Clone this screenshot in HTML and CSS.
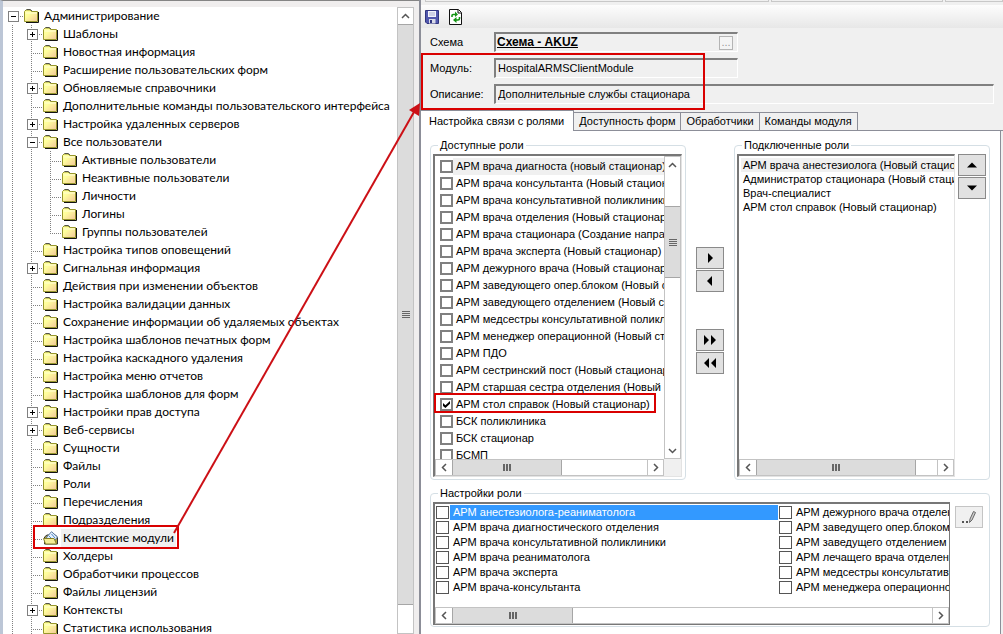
FILE: index.html
```html
<!DOCTYPE html>
<html lang="ru">
<head>
<meta charset="utf-8">
<title>Администрирование</title>
<link rel="stylesheet" href="styles.css">
</head>
<body>
<svg class="defs" aria-hidden="true">
  <defs>
    <linearGradient id="fold" x1="0" y1="0" x2="1" y2="1">
      <stop offset="0.35" stop-color="#ffff9c"/><stop offset="1" stop-color="#f3c79a"/>
    </linearGradient>
    <symbol id="folder" viewBox="0 0 16 14">
      <path d="M2 13.5H14.5V3" fill="none" stroke="#111" stroke-width="1"/>
      <path d="M.5 12.5V2.5L2 1H6L7.5 2.5H13.5V12.5Z" fill="url(#fold)" stroke="#97972b"/>
      <path d="M1.5 4H13" stroke="#ffffd8"/>
      <path d="M2.5 .5H6.5L8 2" fill="none" stroke="#333" stroke-width=".8"/>
    </symbol>
    <symbol id="folder-open" viewBox="0 0 16 14">
      <path d="M1.5 13V6L4 4H12L14.5 6V13Z" fill="#b5a53c" stroke="#333"/>
      <path d="M3 7L8.500 .7L14.500 6L12 9Z" fill="#e4efff" stroke="#57779f"/>
      <path d="M6 5L9 8M8.500 3L12 7" stroke="#4b8ac9"/>
      <path d="M2.500 13L.5 7.500H11L13.500 13Z" fill="#f6ee94" stroke="#85802a"/>
    </symbol>
  </defs>
</svg>
<div class="app">
  <aside class="sidebar">
    <nav class="tree" aria-label="Администрирование">
      <ul class="root">
        <li><div class="row"><button class="tog minus" aria-label="Свернуть"></button><svg class="ico"><use href="#folder"/></svg><span>Администрирование</span></div>
        <ul>
          <li><div class="row"><button class="tog plus" aria-label="Развернуть"></button><svg class="ico"><use href="#folder"/></svg><span>Шаблоны</span></div></li>
          <li><div class="row"><i class="stem"></i><svg class="ico"><use href="#folder"/></svg><span>Новостная информация</span></div></li>
          <li><div class="row"><i class="stem"></i><svg class="ico"><use href="#folder"/></svg><span>Расширение пользовательских форм</span></div></li>
          <li><div class="row"><button class="tog plus" aria-label="Развернуть"></button><svg class="ico"><use href="#folder"/></svg><span>Обновляемые справочники</span></div></li>
          <li><div class="row"><i class="stem"></i><svg class="ico"><use href="#folder"/></svg><span>Дополнительные команды пользовательского интерфейса</span></div></li>
          <li><div class="row"><button class="tog plus" aria-label="Развернуть"></button><svg class="ico"><use href="#folder"/></svg><span>Настройка удаленных серверов</span></div></li>
          <li><div class="row"><button class="tog minus" aria-label="Свернуть"></button><svg class="ico"><use href="#folder"/></svg><span>Все пользователи</span></div>
          <ul class="ends">
            <li><div class="row"><i class="stem"></i><svg class="ico"><use href="#folder"/></svg><span>Активные пользователи</span></div></li>
            <li><div class="row"><i class="stem"></i><svg class="ico"><use href="#folder"/></svg><span>Неактивные пользователи</span></div></li>
            <li><div class="row"><i class="stem"></i><svg class="ico"><use href="#folder"/></svg><span>Личности</span></div></li>
            <li><div class="row"><i class="stem"></i><svg class="ico"><use href="#folder"/></svg><span>Логины</span></div></li>
            <li><div class="row"><i class="stem"></i><svg class="ico"><use href="#folder"/></svg><span>Группы пользователей</span></div></li>
          </ul></li>
          <li><div class="row"><i class="stem"></i><svg class="ico"><use href="#folder"/></svg><span>Настройка типов оповещений</span></div></li>
          <li><div class="row"><button class="tog plus" aria-label="Развернуть"></button><svg class="ico"><use href="#folder"/></svg><span>Сигнальная информация</span></div></li>
          <li><div class="row"><i class="stem"></i><svg class="ico"><use href="#folder"/></svg><span>Действия при изменении объектов</span></div></li>
          <li><div class="row"><i class="stem"></i><svg class="ico"><use href="#folder"/></svg><span>Настройка валидации данных</span></div></li>
          <li><div class="row"><i class="stem"></i><svg class="ico"><use href="#folder"/></svg><span>Сохранение информации об удаляемых объектах</span></div></li>
          <li><div class="row"><i class="stem"></i><svg class="ico"><use href="#folder"/></svg><span>Настройка шаблонов печатных форм</span></div></li>
          <li><div class="row"><i class="stem"></i><svg class="ico"><use href="#folder"/></svg><span>Настройка каскадного удаления</span></div></li>
          <li><div class="row"><i class="stem"></i><svg class="ico"><use href="#folder"/></svg><span>Настройка меню отчетов</span></div></li>
          <li><div class="row"><i class="stem"></i><svg class="ico"><use href="#folder"/></svg><span>Настройка шаблонов для форм</span></div></li>
          <li><div class="row"><button class="tog plus" aria-label="Развернуть"></button><svg class="ico"><use href="#folder"/></svg><span>Настройки прав доступа</span></div></li>
          <li><div class="row"><button class="tog plus" aria-label="Развернуть"></button><svg class="ico"><use href="#folder"/></svg><span>Веб-сервисы</span></div></li>
          <li><div class="row"><i class="stem"></i><svg class="ico"><use href="#folder"/></svg><span>Сущности</span></div></li>
          <li><div class="row"><i class="stem"></i><svg class="ico"><use href="#folder"/></svg><span>Файлы</span></div></li>
          <li><div class="row"><i class="stem"></i><svg class="ico"><use href="#folder"/></svg><span>Роли</span></div></li>
          <li><div class="row"><i class="stem"></i><svg class="ico"><use href="#folder"/></svg><span>Перечисления</span></div></li>
          <li><div class="row"><i class="stem"></i><svg class="ico"><use href="#folder"/></svg><span>Подразделения</span></div></li>
          <li><div class="row current"><i class="stem"></i><svg class="ico"><use href="#folder-open"/></svg><span>Клиентские модули</span></div></li>
          <li><div class="row"><i class="stem"></i><svg class="ico"><use href="#folder"/></svg><span>Холдеры</span></div></li>
          <li><div class="row"><i class="stem"></i><svg class="ico"><use href="#folder"/></svg><span>Обработчики процессов</span></div></li>
          <li><div class="row"><i class="stem"></i><svg class="ico"><use href="#folder"/></svg><span>Файлы лицензий</span></div></li>
          <li><div class="row"><button class="tog plus" aria-label="Развернуть"></button><svg class="ico"><use href="#folder"/></svg><span>Контексты</span></div></li>
          <li><div class="row"><i class="stem"></i><svg class="ico"><use href="#folder"/></svg><span>Статистика использования</span></div></li>
        </ul></li>
      </ul>
    </nav>
    <div class="vbar tree-bar">
      <button aria-label="Вверх"><svg viewBox="0 0 9 9"><path d="M1 6L4.500 2.500L8 6"/></svg></button>
      <div class="thumb"><i class="grip"></i></div>
      <div class="rest"></div>
    </div>
  </aside>

  <main class="editor">
    <div class="heads"><i></i><i></i><i></i></div>
    <div class="toolbar">
      <button aria-label="Сохранить"><svg width="14" height="14" viewBox="0 0 14 14"><path d="M.5.5H13.500V13.500H2L.5 12Z" fill="#5157ad" stroke="#30357f"/><path d="M3 1H11V7H3Z" fill="#f2f3fb"/><path d="M4 3H10M4 5H10" stroke="#a9adcf"/><path d="M4 9H10.500V13.500H4Z" fill="#d9dbe8"/><path d="M5 10H7V13H5Z" fill="#30357f"/></svg></button>
      <button aria-label="Обновить"><svg width="14" height="16" viewBox="0 0 14 16"><path d="M.5.5H9.500L12.500 3.500V15.500H.5Z" fill="#fff" stroke="#111"/><path d="M9 1V4H12" fill="none" stroke="#111"/><path d="M3 8V6.500Q3 5.500 4 5.500H7" fill="none" stroke="#149414" stroke-width="1.600"/><path d="M6 2.500L9 5.500L6 8Z" fill="#149414"/><path d="M10.500 8V9.500Q10.500 11 9 11H7" fill="none" stroke="#149414" stroke-width="1.600"/><path d="M7.500 8L4 11L7.500 14Z" fill="#149414"/></svg></button>
    </div>
    <form class="props">
      <label for="schema">Схема</label>
      <div class="field short"><input id="schema" class="link" value="Схема - AKUZ" readonly><button type="button" class="dots" aria-label="Выбрать">...</button></div>
      <label for="module">Модуль:</label>
      <div class="field short"><input id="module" value="HospitalARMSClientModule" readonly></div>
      <label for="descr">Описание:</label>
      <div class="field"><input id="descr" value="Дополнительные службы стационара" readonly></div>
    </form>
    <div class="tabs" role="tablist">
      <button role="tab" aria-selected="true">Настройка связи с ролями</button>
      <button role="tab">Доступность форм</button>
      <button role="tab">Обработчики</button>
      <button role="tab">Команды модуля</button>
      <i></i>
    </div>
    <section class="panel">
      <div class="pair">
        <fieldset>
          <legend>Доступные роли</legend>
          <div class="box available">
            <div class="items checks">
              <label class="hot"><input type="checkbox"><span>АРМ врача диагноста (новый стационар)</span></label>
              <label><input type="checkbox"><span>АРМ врача консультанта (Новый стационар)</span></label>
              <label><input type="checkbox"><span>АРМ врача консультативной поликлиники</span></label>
              <label><input type="checkbox"><span>АРМ врача отделения (Новый стационар)</span></label>
              <label><input type="checkbox"><span>АРМ врача стационара (Создание направления)</span></label>
              <label><input type="checkbox"><span>АРМ врача эксперта (Новый стационар)</span></label>
              <label><input type="checkbox"><span>АРМ дежурного врача (Новый стационар)</span></label>
              <label><input type="checkbox"><span>АРМ заведующего опер.блоком (Новый стационар)</span></label>
              <label><input type="checkbox"><span>АРМ заведующего отделением (Новый стационар)</span></label>
              <label><input type="checkbox"><span>АРМ медсестры консультативной поликлиники</span></label>
              <label><input type="checkbox"><span>АРМ менеджер операционной (Новый стационар)</span></label>
              <label><input type="checkbox"><span>АРМ ПДО</span></label>
              <label><input type="checkbox"><span>АРМ сестринский пост (Новый стационар)</span></label>
              <label><input type="checkbox"><span>АРМ старшая сестра отделения (Новый стационар)</span></label>
              <label><input type="checkbox" checked><span>АРМ стол справок (Новый стационар)</span></label>
              <label><input type="checkbox"><span>БСК поликлиника</span></label>
              <label><input type="checkbox"><span>БСК стационар</span></label>
              <label><input type="checkbox"><span>БСМП</span></label>
            </div>
            <div class="vbar">
              <button aria-label="Вверх"><svg viewBox="0 0 9 9"><path d="M1 6L4.500 2.500L8 6"/></svg></button>
              <div class="before"></div>
              <div class="thumb"><i class="grip"></i></div>
              <div class="rest"></div>
              <button aria-label="Вниз"><svg viewBox="0 0 9 9"><path d="M1 3L4.500 6.500L8 3"/></svg></button>
            </div>
            <div class="hbar">
              <button aria-label="Влево"><svg viewBox="0 0 9 9"><path d="M6 1L2.500 4.500L6 8"/></svg></button>
              <div class="thumb"><i class="grip"></i></div>
              <div class="rest"></div>
              <button aria-label="Вправо"><svg viewBox="0 0 9 9"><path d="M3 1L6.500 4.500L3 8"/></svg></button>
            </div>
          </div>
        </fieldset>
        <div class="moves">
          <button aria-label="Добавить"><svg width="14" height="10"><path d="M5 0L10 5L5 10Z"/></svg></button>
          <button aria-label="Убрать"><svg width="14" height="10"><path d="M9 0L4 5L9 10Z"/></svg></button>
          <button aria-label="Добавить все" class="apart"><svg width="14" height="10"><path d="M1 0L6 5L1 10ZM8 0L13 5L8 10Z"/></svg></button>
          <button aria-label="Убрать все"><svg width="14" height="10"><path d="M6 0L1 5L6 10ZM13 0L8 5L13 10Z"/></svg></button>
        </div>
        <fieldset>
          <legend>Подключенные роли</legend>
          <div class="with-side">
            <div class="box linked">
              <ul class="items plain">
                <li class="hot">АРМ врача анестезиолога (Новый стационар)</li>
                <li>Администратор стационара (Новый стационар)</li>
                <li>Врач-специалист</li>
                <li>АРМ стол справок (Новый стационар)</li>
              </ul>
              <div class="hbar">
                <button aria-label="Влево"><svg viewBox="0 0 9 9"><path d="M6 1L2.500 4.500L6 8"/></svg></button>
                <div class="thumb"><i class="grip"></i></div>
                <div class="rest"></div>
                <button aria-label="Вправо"><svg viewBox="0 0 9 9"><path d="M3 1L6.500 4.500L3 8"/></svg></button>
              </div>
            </div>
            <div class="side">
              <button aria-label="Выше"><svg width="10" height="6"><path d="M0 5.500L5 .5L10 5.500Z"/></svg></button>
              <button aria-label="Ниже"><svg width="10" height="6"><path d="M0 .5L5 5.500L10 .5Z"/></svg></button>
            </div>
          </div>
        </fieldset>
      </div>
      <fieldset class="settings">
        <legend>Настройки роли</legend>
        <div class="with-side">
          <div class="box roles">
            <div class="items columns">
              <div>
                <label class="picked"><input type="checkbox"><span>АРМ анестезиолога-реаниматолога</span></label>
                <label><input type="checkbox"><span>АРМ врача диагностического отделения</span></label>
                <label><input type="checkbox"><span>АРМ врача консультативной поликлиники</span></label>
                <label><input type="checkbox"><span>АРМ врача реаниматолога</span></label>
                <label><input type="checkbox"><span>АРМ врача эксперта</span></label>
                <label><input type="checkbox"><span>АРМ врача-консультанта</span></label>
              </div>
              <div>
                <label><input type="checkbox"><span>АРМ дежурного врача отделения</span></label>
                <label><input type="checkbox"><span>АРМ заведущего опер.блоком</span></label>
                <label><input type="checkbox"><span>АРМ заведущего отделением</span></label>
                <label><input type="checkbox"><span>АРМ лечащего врача отделения</span></label>
                <label><input type="checkbox"><span>АРМ медсестры консультативной</span></label>
                <label><input type="checkbox"><span>АРМ менеджера операционной</span></label>
              </div>
            </div>
            <div class="hbar">
              <button aria-label="Влево"><svg viewBox="0 0 9 9"><path d="M6 1L2.500 4.500L6 8"/></svg></button>
              <div class="thumb"><i class="grip"></i></div>
              <div class="rest"></div>
              <button aria-label="Вправо"><svg viewBox="0 0 9 9"><path d="M3 1L6.500 4.500L3 8"/></svg></button>
            </div>
          </div>
          <div class="side edit">
            <button aria-label="Изменить"><svg width="16" height="14"><path d="M1 11H3V13H1ZM5 11H7V13H5Z" fill="#555"/><path d="M8.500 12.500L9 9L12.500 1.500L14.500 2.500L11 10Z" fill="#ccc" stroke="#666"/></svg></button>
          </div>
        </div>
      </fieldset>
    </section>
  </main>

  <svg class="marks" width="1003" height="634" aria-hidden="true">
    <g fill="none" stroke="#d90000" stroke-width="2">
      <rect x="34" y="526" width="144" height="22"/>
      <rect x="422" y="54" width="282" height="55"/>
      <rect x="435" y="394" width="220" height="18"/>
      <path d="M174 533L414 112" stroke="#cc1016"/>
    </g>
    <path d="M420 103L419 116L409 110Z" fill="#cc1016"/>
  </svg>
</div>
</body>
</html>
```
FILE: styles.css
```css
* { box-sizing: border-box; }
body {
  margin: 0;
  background: #f0f0f0;
  color: #000;
  font: 11px/13px "Liberation Sans", Arial, sans-serif;
}
button, input { font: inherit; color: inherit; margin: 0; padding: 0; }
ul { list-style: none; margin: 0; padding: 0; }
.defs { position: absolute; width: 0; height: 0; }
.app { position: relative; display: flex; height: 100vh; overflow: hidden; }
.marks { position: absolute; top: 0; left: 0; pointer-events: none; }

/* Navigation tree */
.sidebar {
  display: flex;
  flex: 0 0 419px;
  min-width: 0;
  padding-right: 5px;
  border-left: 3px solid #bcc6d6;
  border-top: 1px solid #858585;
  background: #f0eeee;
  padding-top: 6px;
}
.tree {
  flex: 1;
  min-width: 0;
  overflow: hidden;
  background: #fff;
  font: 12px/18px Lato, "Noto Sans", sans-serif;
  white-space: nowrap;
}
.tree ul {
  background: linear-gradient(#808080 1px, transparent 1px) 9px 0 / 1px 2px repeat-y;
}
.tree ul ul { margin-left: 19px; }
.tree .root { background-position: 9px 10px; }
.tree .ends > li:last-child {
  background: linear-gradient(#fff, #fff) 9px 10px / 1px 100% no-repeat;
}
.root > li > .row { background: #fff; }
.row { display: flex; align-items: center; height: 18px; }
.row span { padding: 0 2px; margin-left: 2px; line-height: 18px; }
.current span { background: #f0f0f0; }
.ico { flex: none; width: 16px; height: 14px; }
.stem, .tog {
  flex: none;
  width: 21px;
  height: 17px;
  border: 0;
  background: none;
}
.stem { padding-left: 9px; }
.stem::before {
  content: "";
  display: block;
  margin-top: 9px;
  height: 1px;
  background: linear-gradient(90deg, #808080 1px, transparent 1px) 0 0 / 2px 1px;
}
.tog { display: flex; align-items: center; gap: 1px; padding-left: 5px; }
.tog::before {
  content: "";
  width: 9px;
  height: 9px;
  border: 1px solid #808080;
  background: linear-gradient(#000, #000) 50% 50% / 5px 1px no-repeat, #fff;
}
.tog.plus::before {
  background: linear-gradient(#000, #000) 50% 50% / 5px 1px no-repeat,
    linear-gradient(#000, #000) 50% 50% / 1px 5px no-repeat, #fff;
}
.tog::after {
  content: "";
  flex: 1;
  height: 1px;
  background: linear-gradient(90deg, #808080 1px, transparent 1px) 0 0 / 2px 1px;
}

/* Scroll bars */
.vbar, .hbar { display: flex; background: #fff; border: 1px solid #c3c3c3; }
.vbar { flex: none; flex-direction: column; width: 17px; }
.hbar { height: 17px; }
.vbar button, .hbar button {
  display: flex;
  align-items: center;
  justify-content: center;
  flex: 0 0 16px;
  border: 0;
  background: #fff;
}
.hbar button:last-child { border-left: 1px solid #c3c3c3; }
.vbar svg, .hbar svg { width: 9px; height: 9px; fill: none; stroke: #555; stroke-width: 1.5; }
.thumb {
  display: flex;
  align-items: center;
  justify-content: center;
  background: #dcdcdc;
  border: 0 solid #a6a6a6;
}
.vbar .thumb { border-width: 1px 0; }
.hbar .thumb { border-width: 0 1px; }
.grip { width: 8px; height: 7px; background: repeating-linear-gradient(#666 0 1px, transparent 1px 2px); }
.hbar .grip { background: repeating-linear-gradient(90deg, #666 0 2px, transparent 2px 3px); }
.tree-bar .thumb { flex: 1; }
.tree-bar .rest { flex: 0 0 28px; }

/* Editor */
.editor {
  flex: 1;
  min-width: 0;
  display: flex;
  flex-direction: column;
  border-left: 2px solid #8c8e98;
}
.heads { display: flex; gap: 2px; height: 5px; padding-left: 4px; }
.heads i { flex: 0 0 172px; height: 2px; border: 1px solid #c8c8c8; border-top: 0; }
.heads i:first-child { flex-basis: 344px; }
.heads i:last-child { flex: 1; }
.toolbar {
  display: flex;
  align-items: center;
  gap: 10px;
  height: 23px;
  padding-left: 4px;
  background: linear-gradient(#fdfdfd, #e7e7e7);
}
.toolbar button { display: flex; border: 0; background: none; }
.props {
  display: grid;
  grid-template-columns: 64px 1fr;
  align-items: center;
  row-gap: 6px;
  padding: 4px 9px 6px 9px;
}
.field {
  display: flex;
  align-items: center;
  height: 20px;
  border: 1px solid #fff;
  border-top: 2px solid #808080;
  border-left: 2px solid #808080;
  padding: 0 4px 0 1px;
}
.field.short { width: 244px; }
.field input { flex: 1; min-width: 0; border: 0; background: none; outline: 0; padding-left: 1px; }
.field .link { font-size: 12px; font-weight: bold; text-decoration: underline; padding: 0; }
.dots { width: 14px; height: 14px; line-height: 9px; border: 1px solid #b4b4b4; background: #f4f4f4; color: #999; }

.tabs { display: flex; align-items: flex-end; height: 21px; }
.tabs button {
  height: 19px;
  padding: 0 5px;
  border: 1px solid #8c8e98;
  border-width: 1px 1px 1px 0;
  background: #f0f0f0;
  white-space: nowrap;
}
.tabs button[aria-selected="true"] {
  height: 21px;
  padding: 0 9px 0 8px;
  border-bottom: 0;
  background: #fff;
}
.tabs i { flex: 1; border-bottom: 1px solid #8c8e98; }
.panel {
  flex: 1;
  margin-right: 2px;
  padding: 8px 10px 0 9px;
  background: #fff;
  border-right: 1px solid #8c8e98;
}
.pair { display: flex; justify-content: space-between; }
fieldset {
  margin: 0;
  min-width: 0;
  border: 1px solid #d5dfe5;
  border-radius: 4px;
  padding: 2px 3px 2px 2px;
}
legend { padding: 0 2px; margin-left: 5px; height: 13px; }
.pair fieldset { flex: 0 1 256px; }
.box {
  border: 1px solid #e3e3e3;
  border-top: 2px solid #777;
  border-left: 2px solid #777;
  min-width: 0;
}
.items { overflow: hidden; white-space: nowrap; }
.available { display: grid; grid-template-columns: 1fr 17px; grid-template-rows: 303px 17px; background: #f0f0f0; }
.available .items { min-width: 0; padding-top: 2px; background: #fff; }
.available .thumb { flex: 0 0 72px; }
.available .before { flex: 0 0 33px; }
.rest { flex: 1; }
.available .hbar .thumb { flex: 0 0 110px; }
label { display: flex; align-items: center; }
.checks label { height: 17px; padding-left: 5px; }
.checks span { flex: 1; padding-left: 3px; line-height: 17px; }
.hot span, li.hot { background: #f0f0f0; }
input[type="checkbox"] {
  appearance: none;
  flex: none;
  width: 13px;
  height: 13px;
  border: 2px solid #808080;
  background: #fff;
}
input[type="checkbox"]:checked::after {
  content: "";
  display: block;
  margin: 1px;
  width: 7px;
  height: 7px;
  background: #000;
  clip-path: polygon(0 30%, 35% 60%, 100% 0, 100% 40%, 35% 100%, 0 70%);
}
.moves { display: flex; flex-direction: column; gap: 1px; padding-top: 108px; }
.moves button, .side button {
  display: flex;
  align-items: center;
  justify-content: center;
  width: 28px;
  height: 22px;
  border: 1px solid #8a8a8a;
  background: #e1e1e1;
}
.moves .apart { margin-top: 36px; }
.with-side { display: flex; gap: 3px; }
.with-side .box { flex: 1; }
.side { display: flex; flex-direction: column; gap: 1px; }
.linked { display: flex; flex-direction: column; }
.plain { height: 303px; padding: 2px 0 0 2px; }
.plain li { height: 14px; line-height: 14px; padding-left: 2px; }
.linked .hbar .thumb { flex: 0 0 160px; }
.settings { margin-top: 7px; padding-bottom: 1px; }
.columns { display: grid; grid-template-columns: 343px 1fr; height: 103px; padding-top: 1px; }
.columns > div { min-width: 0; overflow: hidden; }
.columns label { height: 15px; padding-left: 1px; }
.columns input[type="checkbox"] { border: 1px solid #555; }
.columns span { flex: 1; margin-left: 1px; padding-left: 3px; line-height: 15px; }
.picked span { background: #3399ff; color: #fff; }
.roles { border-right-color: #777; border-bottom-color: #777; }
.roles .hbar .thumb { flex: 0 0 121px; }
.edit { padding: 4px 3px 0 2px; }
.side.edit button { background: #f0f0f0; border-color: #c4c4c4; }
```
